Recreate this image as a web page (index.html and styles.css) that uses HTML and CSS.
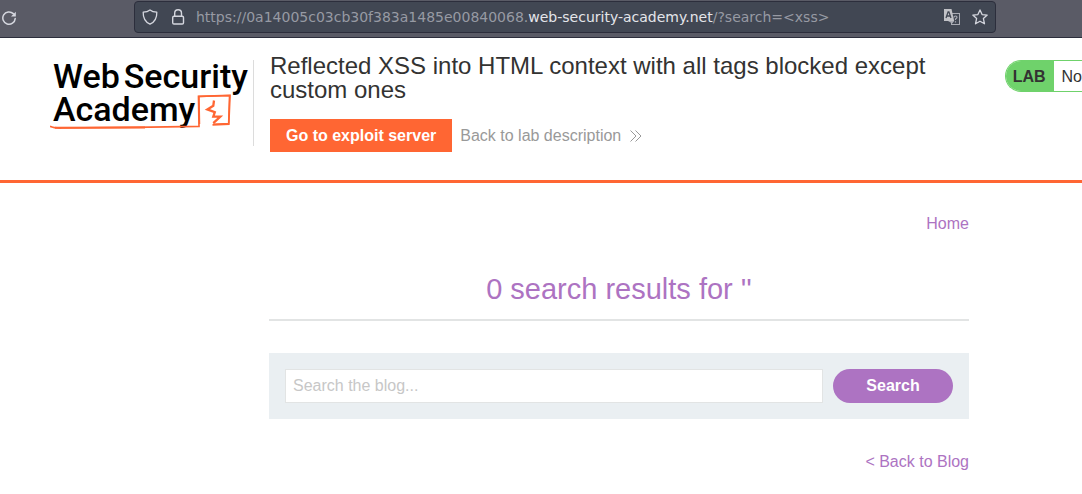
FILE: index.html
```html
<!DOCTYPE html>
<html lang="en">
<head>
<meta charset="utf-8">
<title>Reflected XSS into HTML context with all tags blocked except custom ones</title>
<link rel="stylesheet" href="styles.css">
</head>
<body>
<div class="toolbar">
  <button class="icon-button" type="button" aria-label="Reload">
    <svg width="16" height="16" viewBox="0 0 16 16" fill="none" stroke="currentColor" stroke-width="1.5" stroke-linecap="round"><path d="M13.300 3.600A6.200 6.200 0 1 0 15.200 8.600"/><path d="M15.800 1.800v4.800H11z" fill="currentColor" stroke="none"/></svg>
  </button>
  <div class="address">
    <svg width="16" height="16" viewBox="0 0 16 16" fill="none" stroke="currentColor" stroke-width="1.3" stroke-linejoin="round"><path d="M8 .9C6.200 2.300 3.800 3 1.200 3.200C1 8.500 3.200 12.900 8 15.200C12.800 12.900 15 8.500 14.800 3.200C12.200 3 9.800 2.300 8 .9z"/></svg>
    <svg width="16" height="16" viewBox="0 0 16 16" fill="none" stroke="currentColor" stroke-width="1.4"><rect x="2.700" y="7.200" width="10.800" height="7.800" rx="1.300"/><path d="M4.700 7V4.200a3.400 3.400 0 0 1 6.800 0V7"/></svg>
    <div class="url" role="textbox" aria-label="Address">https://0a14005c03cb30f383a1485e00840068.<span class="domain">web-security-academy.net</span>/?search=&lt;xss&gt;</div>
    <button class="icon-button" type="button" aria-label="Translate">
      <svg width="16" height="16" viewBox="0 0 16 16" fill="none"><rect x="7.500" y="4.500" width="8" height="11" stroke="#a9abb4"/><path d="M10 8.500q0-1.500 1.500-1.500t1.500 1.300q0 .9-1.500 1.700v1M11.500 12.200v1.200" stroke="#a9abb4" stroke-width="1.200"/><path d="M0 0h7.500l2.700 12H0z" fill="#c1c2c7"/><path d="M2 9L4.100 2.800h.8L7 9M2.800 7h3.400" stroke="#414753" stroke-width="1.300"/><path d="M4 12h6.200l-2 2.600z" fill="#a9abb4"/></svg>
    </button>
    <button class="icon-button" type="button" aria-label="Bookmark">
      <svg width="16" height="16" viewBox="0 0 16 16" fill="none" stroke="currentColor" stroke-width="1.300" stroke-linejoin="round"><path d="M8 .9l2.100 4.700 5.100.5-3.800 3.500 1.100 5.200L8 12.200l-4.500 2.600 1.100-5.200L.8 6.100l5.100-.5z"/></svg>
    </button>
  </div>
</div>

<header class="lab-header">
  <a class="logo" href="#" aria-label="Web Security Academy">
    <span class="logo-line"><span>Web</span><span>Security</span></span>
    <span class="logo-line">Academy</span>
    <svg class="logo-mark" width="184" height="38" viewBox="0 0 184 38" fill="none" stroke="#ff6633"><path d="M0 33.300Q4 35.300 12 35Q70 34.600 100 34.200L149 33.300L148.500 3.400L180 2.400L178.800 31.200L162.500 31.800" stroke-width="1.700"/><path d="M149.500 31L149 3.500L179.500 2.600L178.600 30.500L163 31.200" stroke-width="1.500"/><path d="M5 34.800L95 34.500" stroke-width="2"/><path d="M164 7.500l-.7 5.200-6 3.700 7.500 2.800-1.500 4.500h7l-7 6.500" stroke-width="2.300"/></svg>
  </a>
  <div class="lab-info">
    <h1>Reflected XSS into HTML context with all tags blocked except custom ones</h1>
    <div class="lab-links">
      <a class="exploit" href="#">Go to exploit server</a>
      <a class="description" href="#">Back to lab description
        <svg width="12" height="12" viewBox="0 0 12 12" fill="none" stroke="currentColor"><path d="M.5.500L6 6l-5.500 5.500M5.500.500L11 6l-5.500 5.500"/></svg>
      </a>
    </div>
  </div>
  <div class="status"><strong>LAB</strong><span>No</span></div>
</header>

<main>
  <nav><a href="#">Home</a></nav>
  <h2>0 search results for ''</h2>
  <form class="search">
    <input type="text" placeholder="Search the blog..." aria-label="Search the blog">
    <button type="button">Search</button>
  </form>
  <div class="back"><a href="#">&lt; Back to Blog</a></div>
</main>
</body>
</html>
```

FILE: styles.css
```css
* { box-sizing: border-box; }
body {
  margin: 0;
  background: #fff;
  color: #333332;
  font: 16px/20px "Liberation Sans", Arial, sans-serif;
}
a { color: inherit; text-decoration: none; }
svg { display: block; flex: none; }

.toolbar {
  display: flex;
  align-items: flex-start;
  justify-content: space-between;
  height: 38px;
  padding: 1px 86px 0 0;
  background: #5a5b66;
  border-bottom: 1px solid #2c2e3c;
  color: #d5d7df;
}
.icon-button {
  flex: none;
  padding: 0;
  border: 0;
  background: none;
  color: inherit;
}
.toolbar > .icon-button { padding-top: 9px; }
.address {
  display: flex;
  align-items: center;
  gap: 12px;
  flex: 1;
  height: 32px;
  margin-left: 118px;
  padding: 0 7px;
  border: 1px solid #2c2e3c;
  border-radius: 4px;
  background: #414753;
}
.url {
  flex: 1;
  overflow: hidden;
  margin-left: -2px;
  white-space: nowrap;
  color: #979aa3;
  font: 14px/20px "DejaVu Sans", sans-serif;
}
.domain { color: #e4e5ea; }

.lab-header {
  display: flex;
  align-items: flex-start;
  min-height: 145px;
  padding: 16px 0 24px 50px;
  border-bottom: 3px solid #ff6633;
}
.logo {
  position: relative;
  flex: none;
  width: 204px;
  height: 86px;
  margin-top: 6px;
  padding-left: 3px;
  border-right: 1px solid #dcdcdc;
  color: #000;
  font: 500 34px/33px Roboto, sans-serif;
}
.logo-line { display: flex; gap: 4px; }
.logo-mark { position: absolute; left: 0; top: 33px; }
.lab-info { flex: 1; padding-left: 16px; }
h1 { margin: 0; font-size: 24px; line-height: 24px; font-weight: 400; }
.lab-links {
  display: flex;
  align-items: center;
  gap: 8px;
  margin-top: 17px;
}
.exploit {
  padding: 7px 16px 6px;
  background: #ff6633;
  color: #fff;
  font-weight: 700;
}
.description {
  display: flex;
  align-items: center;
  gap: 9px;
  color: #999;
}
.status {
  display: flex;
  flex: none;
  height: 32px;
  margin: 6px 0 0 64px;
  border: 1px solid #6fd26b;
  border-right: 0;
  border-radius: 16px 0 0 16px;
  line-height: 32px;
  overflow: hidden;
}
.status strong { padding: 0 8px 0 7px; background: #6fd26b; }
.status span { padding-left: 8px; }

main { padding: 31px 113px 20px 269px; color: #ad73c2; }
nav, .back { text-align: right; }
h2 {
  margin: 35px 0 32px;
  padding-bottom: 10px;
  border-bottom: 2px solid #e2e4e4;
  font-size: 29px;
  line-height: 40px;
  font-weight: 400;
  text-align: center;
}
.search {
  display: flex;
  gap: 10px;
  padding: 16px;
  margin-bottom: 33px;
  background: #eaeff2;
}
.search input {
  flex: 1;
  min-width: 0;
  height: 34px;
  padding: 0 7px;
  border: 1px solid #e2e4e4;
  background: #fff;
  font: inherit;
}
.search input::placeholder { color: #c7c7c7; }
.search button {
  width: 120px;
  height: 34px;
  border: 0;
  border-radius: 17px;
  background: #ad73c2;
  color: #fff;
  font: inherit;
  font-weight: 700;
}
```
